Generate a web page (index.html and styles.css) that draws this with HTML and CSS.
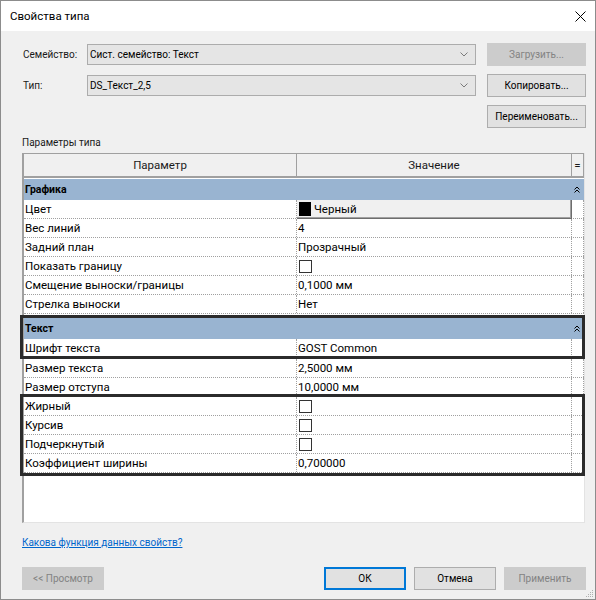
FILE: index.html
```html
<!DOCTYPE html>
<html lang="ru">
<head>
<meta charset="utf-8">
<title>Свойства типа</title>
<link rel="stylesheet" href="styles.css">
</head>
<body>
<div class="window">
  <div class="titlebar">
    <span class="title">Свойства типа</span>
    <svg class="close" width="11" height="11" viewBox="0 0 11 11"><path d="M0.5 0.5 L10.5 10.5 M10.5 0.5 L0.5 10.5" stroke="#000" stroke-width="1" fill="none"/></svg>
  </div>
  <div class="body">
    <div class="frow">
      <span class="lbl">Семейство:</span>
      <div class="combo"><span>Сист. семейство: Текст</span><svg width="8" height="5" viewBox="0 0 8 5"><path d="M0.5 0.5 L4 4 L7.5 0.5" stroke="#7a7a7a" fill="none"/></svg></div>
      <button class="btn dis">Загрузить...</button>
    </div>
    <div class="frow">
      <span class="lbl">Тип:</span>
      <div class="combo"><span>DS_Текст_2,5</span><svg width="8" height="5" viewBox="0 0 8 5"><path d="M0.5 0.5 L4 4 L7.5 0.5" stroke="#7a7a7a" fill="none"/></svg></div>
      <button class="btn">Копировать...</button>
    </div>
    <div class="frow end">
      <button class="btn">Переименовать...</button>
    </div>

    <div class="sect">Параметры типа</div>

    <div class="grid">
      <div class="ghead">
        <div class="hc c1">Параметр</div>
        <div class="hc c2">Значение</div>
        <div class="hc c3">=</div>
      </div>

      <div class="grp"><span class="gname">Графика</span><svg class="caret" width="6" height="7" viewBox="0 0 6 7"><path d="M0.5 3.5 L3 1 L5.5 3.5 M0.5 6.5 L3 4 L5.5 6.5" stroke="#000" fill="none"/></svg></div>
      <div class="row"><div class="p">Цвет</div><div class="v colorcell"><span class="swatch"></span>Черный</div><div class="e"></div></div>
      <div class="row"><div class="p">Вес линий</div><div class="v">4</div><div class="e"></div></div>
      <div class="row"><div class="p">Задний план</div><div class="v">Прозрачный</div><div class="e"></div></div>
      <div class="row"><div class="p">Показать границу</div><div class="v"><span class="chk"></span></div><div class="e"></div></div>
      <div class="row"><div class="p">Смещение выноски/границы</div><div class="v">0,1000 мм</div><div class="e"></div></div>
      <div class="row"><div class="p">Стрелка выноски</div><div class="v">Нет</div><div class="e"></div></div>

      <div class="hl hl1">
        <div class="grp"><span class="gname">Текст</span><svg class="caret" width="6" height="7" viewBox="0 0 6 7"><path d="M0.5 3.5 L3 1 L5.5 3.5 M0.5 6.5 L3 4 L5.5 6.5" stroke="#000" fill="none"/></svg></div>
        <div class="row"><div class="p">Шрифт текста</div><div class="v">GOST Common</div><div class="e"></div></div>
      </div>
      <div class="row"><div class="p">Размер текста</div><div class="v">2,5000 мм</div><div class="e"></div></div>
      <div class="row"><div class="p">Размер отступа</div><div class="v">10,0000 мм</div><div class="e"></div></div>
      <div class="hl hl2">
        <div class="row"><div class="p">Жирный</div><div class="v"><span class="chk"></span></div><div class="e"></div></div>
        <div class="row"><div class="p">Курсив</div><div class="v"><span class="chk"></span></div><div class="e"></div></div>
        <div class="row"><div class="p">Подчеркнутый</div><div class="v"><span class="chk"></span></div><div class="e"></div></div>
        <div class="row"><div class="p">Коэффициент ширины</div><div class="v">0,700000</div><div class="e"></div></div>
      </div>
    </div>

    <a class="help" href="#">Какова функция данных свойств?</a>

    <div class="footer">
      <button class="btn sm dis">&lt;&lt; Просмотр</button>
      <button class="btn sm ok">ОК</button>
      <button class="btn sm">Отмена</button>
      <button class="btn sm dis">Применить</button>
    </div>
  </div>
  <svg class="grip" width="10" height="10" viewBox="0 0 10 10">
    <rect x="8" y="2" width="1" height="1" fill="#b0b0b0"/>
    <rect x="6" y="4" width="1" height="1" fill="#b0b0b0"/><rect x="8" y="4" width="1" height="1" fill="#b0b0b0"/>
    <rect x="4" y="6" width="1" height="1" fill="#b0b0b0"/><rect x="6" y="6" width="1" height="1" fill="#b0b0b0"/><rect x="8" y="6" width="1" height="1" fill="#b0b0b0"/>
    <rect x="2" y="8" width="1" height="1" fill="#b0b0b0"/><rect x="4" y="8" width="1" height="1" fill="#b0b0b0"/><rect x="6" y="8" width="1" height="1" fill="#b0b0b0"/><rect x="8" y="8" width="1" height="1" fill="#b0b0b0"/>
  </svg>
</div>
</body>
</html>
```

FILE: styles.css
```css
html, body {
  margin: 0;
  padding: 0;
  background: #ffffff;
}
body {
  font-family: Roboto, "Noto Sans", sans-serif;
  font-size: 10px;
  color: #000;
}
.window {
  position: relative;
  width: 596px;
  height: 600px;
  box-sizing: border-box;
  border: 1px solid #8c8c8c;
  background: #f0f0f0;
}
.titlebar {
  height: 30px;
  background: #ffffff;
  display: flex;
  align-items: center;
  justify-content: space-between;
  padding: 0 9px 0 9px;
}
.title {
  font-size: 11.5px;
}
.close {
  display: block;
}
.body {
  padding: 12px 9px 0 21px;
}
.frow {
  display: flex;
  align-items: center;
  height: 23px;
  margin-bottom: 8px;
}
.frow.end {
  justify-content: flex-end;
}
.lbl {
  width: 65px;
  box-sizing: border-box;
  padding-left: 1px;
  color: #1a1a1a;
  white-space: nowrap;
}
.combo {
  width: 389px;
  height: 21px;
  box-sizing: border-box;
  border: 1px solid #acacac;
  background: #e5e5e5;
  display: flex;
  align-items: center;
  justify-content: space-between;
  padding: 0 7px 0 2px;
}
.combo svg {
  display: block;
}
.btn {
  font-family: inherit;
  font-size: 10px;
  color: #000;
  width: 99px;
  height: 23px;
  box-sizing: border-box;
  border: 1px solid #adadad;
  background: #e1e1e1;
  margin: 0 0 0 11px;
  padding: 0;
  white-space: nowrap;
}
.frow.end .btn {
  margin-left: 0;
}
.btn.dis {
  background: #cccccc;
  border-color: #cccccc;
  color: #838383;
}
.sect {
  font-size: 10px;
  line-height: 14px;
  height: 14px;
  margin-top: 0;
  color: #1a1a1a;
}
.grid {
  margin-top: 3px;
  width: 563px;
  height: 370px;
  box-sizing: border-box;
  border-left: 2px solid #a0a0a0;
  border-right: 1px solid #e3e3e3;
  border-bottom: 1px solid #e3e3e3;
  background: #ffffff;
  font-size: 11.5px;
}
.ghead {
  display: flex;
  height: 25px;
  box-sizing: border-box;
  border-top: 1px solid #a0a0a0;
  border-bottom: 2px solid #a0a0a0;
  background: #f0f0f0;
}
.hc {
  display: flex;
  align-items: center;
  justify-content: center;
  box-sizing: border-box;
  border-right: 1px solid #a0a0a0;
  color: #1a1a1a;
}
.c1 { width: 273px; }
.c2 { width: 275px; }
.c3 { width: 12px; }
.grp {
  display: flex;
  align-items: center;
  height: 22px;
  box-sizing: border-box;
  border-top: 1px solid #ffffff;
  background: #99b4d1;
  font-weight: bold;
  font-size: 10.5px;
}
.gname {
  flex: 1;
  padding-left: 1px;
}
.caret {
  display: block;
  margin-right: 4px;
}
.row {
  display: flex;
  height: 19px;
  box-sizing: border-box;
  border-bottom: 1px dotted #a0a0a0;
  line-height: 18px;
}
.p, .v, .e {
  box-sizing: border-box;
  border-right: 1px dotted #a0a0a0;
  white-space: nowrap;
  display: flex;
  align-items: center;
}
.p { width: 273px; padding-left: 1px; }
.v { width: 275px; padding-left: 1px; }
.e { width: 12px; }
.colorcell {
  background: #f0f0f0;
  border-right: 1px solid #6d6d6d;
  border-bottom: 1px solid #6d6d6d;
  box-shadow: inset -1px -1px 0 #a0a0a0;
  height: 19px;
}
.swatch {
  display: inline-block;
  width: 12px;
  height: 14px;
  background: #000;
  margin: 0 3px 0 1px;
}
.chk {
  display: inline-block;
  width: 13px;
  height: 13px;
  box-sizing: border-box;
  border: 1px solid #333;
  background: #fff;
  margin-left: 1px;
}
.hl {
  position: relative;
}
.hl1 {
  margin-top: 3px;
  margin-bottom: 1px;
}
.hl::after {
  content: "";
  position: absolute;
  left: -4px;
  right: -1px;
  border: 3px solid #2b2b2b;
  pointer-events: none;
}
.hl1::after {
  top: -2px;
  bottom: -1px;
}
.hl2::after {
  top: -3px;
  bottom: -3px;
}
.help {
  display: block;
  margin-top: 13px;
  font-size: 10px;
  line-height: 14px;
  color: #0066cc;
  text-decoration: underline;
  width: max-content;
}
.footer {
  display: flex;
  margin-top: 17px;
}
.btn.sm {
  width: 82px;
  margin-left: 8px;
}
.footer .btn.sm:first-child {
  margin-left: 0;
  margin-right: auto;
}
.btn.ok {
  border: 2px solid #0078d7;
}
.grip {
  position: absolute;
  right: 1px;
  bottom: 1px;
  display: block;
}
```
